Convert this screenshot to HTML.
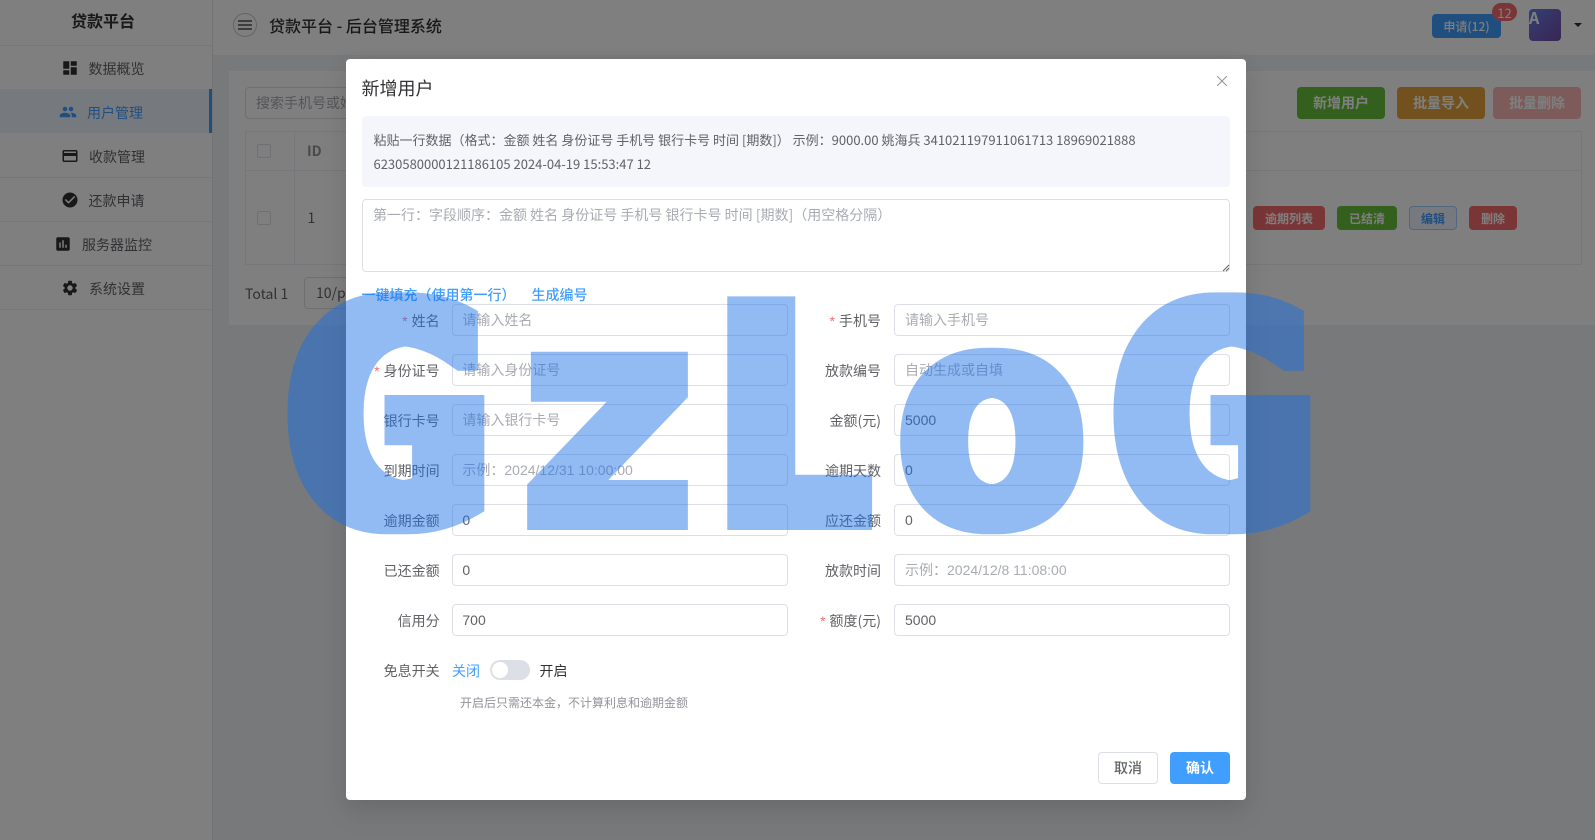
<!DOCTYPE html>
<html lang="zh"><head><meta charset="utf-8"><title>贷款平台 - 后台管理系统</title>
<style>
*{box-sizing:border-box}
html,body{margin:0;padding:0;width:1595px;height:840px;overflow:hidden;background:#f0f2f5;font-family:"Noto Sans CJK SC","Liberation Sans",sans-serif;color:#303133;font-size:14px}
.a{position:absolute}
.t{position:absolute;white-space:nowrap;line-height:20px;height:20px}
.c{display:flex;align-items:center;justify-content:center}
.btn{position:absolute;border-radius:4px;color:#fff;font-weight:700;display:flex;align-items:center;justify-content:center;white-space:nowrap}
svg.i{position:absolute;width:18px;height:18px;fill:#303133}
.line{position:absolute;left:0;width:212px;height:1px;background:#ebeef5}
.inp{position:absolute;width:336px;height:32px;border:1px solid #dcdfe6;border-radius:4px;background:#fff;font-family:"Liberation Sans","Noto Sans CJK SC",sans-serif;font-size:14px;line-height:30px;padding-left:10px;color:#606266;white-space:nowrap}
.l{padding-left:9.4px}
.ph{color:#a8abb2}
.lb{position:absolute;white-space:nowrap;text-align:right;line-height:20px;color:#606266;width:100px}
.lb b{color:#f56c6c;font-weight:400;margin-right:4px;font-family:"Liberation Sans",sans-serif}
.cb{position:absolute;width:14px;height:14px;border:1px solid #dcdfe6;border-radius:2px;background:#fff}
</style></head><body>

<div class="a" style="left:0;top:0;width:213px;height:840px;background:#fff;border-right:1px solid #e6e6e6"></div>
<div class="line" style="top:45px"></div>
<div class="t" style="left:71px;top:10px;font-size:16px;font-weight:700;line-height:20px">贷款平台</div>
<div class="a" style="left:0;top:89px;width:212px;height:44px;background:#ecf5ff"></div>
<div class="a" style="left:209px;top:89px;width:3px;height:44px;background:#409eff"></div>
<div class="line" style="top:177px"></div><div class="line" style="top:221px"></div><div class="line" style="top:265px"></div><div class="line" style="top:309px"></div>

<svg class="i" viewBox="0 0 24 24" style="left:61px;top:59px"><path d="M3 13h8V3H3v10zm0 8h8v-6H3v6zm10 0h8V11h-8v10zm0-18v6h8V3h-8z"/></svg>
<div class="t" style="left:88.5px;top:59px;color:#606266">数据概览</div>
<svg class="i" viewBox="0 0 24 24" style="left:59px;top:103px;fill:#409eff"><path d="M16 11c1.66 0 2.99-1.34 2.99-3S17.66 5 16 5c-1.66 0-3 1.34-3 3s1.34 3 3 3zm-8 0c1.66 0 2.99-1.34 2.99-3S9.66 5 8 5C6.34 5 5 6.34 5 8s1.34 3 3 3zm0 2c-2.33 0-7 1.17-7 3.5V19h14v-2.5c0-2.33-4.67-3.5-7-3.5zm8 0c-.29 0-.62.02-.97.05 1.16.84 1.97 1.97 1.97 3.45V19h6v-2.5c0-2.33-4.67-3.5-7-3.5z"/></svg>
<div class="t" style="left:87px;top:103px;color:#409eff">用户管理</div>
<svg class="i" viewBox="0 0 24 24" style="left:61px;top:147px"><path d="M20 4H4c-1.11 0-1.99.89-1.99 2L2 18c0 1.11.89 2 2 2h16c1.11 0 2-.89 2-2V6c0-1.11-.89-2-2-2zm0 14H4v-6h16v6zm0-10H4V6h16v2z"/></svg>
<div class="t" style="left:89px;top:147px;color:#606266">收款管理</div>
<svg class="i" viewBox="0 0 24 24" style="left:61px;top:191px"><path d="M12 2C6.48 2 2 6.48 2 12s4.48 10 10 10 10-4.48 10-10S17.52 2 12 2zm-2 15l-5-5 1.41-1.41L10 14.17l7.59-7.59L19 8l-9 9z"/></svg>
<div class="t" style="left:88.5px;top:191px;color:#606266">还款申请</div>
<svg class="i" viewBox="0 0 24 24" style="left:54px;top:235px"><path d="M19 3H5c-1.1 0-2 .9-2 2v14c0 1.1.9 2 2 2h14c1.1 0 2-.9 2-2V5c0-1.1-.9-2-2-2zM9 17H7v-7h2v7zm4 0h-2V7h2v10zm4 0h-2v-4h2v4z"/></svg>
<div class="t" style="left:82px;top:235px;color:#606266">服务器监控</div>
<svg class="i" viewBox="0 0 24 24" style="left:61px;top:279px"><path d="M19.14 12.94c.04-.3.06-.61.06-.94 0-.32-.02-.64-.07-.94l2.03-1.58c.18-.14.23-.41.12-.61l-1.92-3.32c-.12-.22-.37-.29-.59-.22l-2.39.96c-.5-.38-1.03-.7-1.62-.94l-.36-2.54c-.04-.24-.24-.41-.48-.41h-3.84c-.24 0-.43.17-.47.41l-.36 2.54c-.59.24-1.13.57-1.62.94l-2.39-.96c-.22-.08-.47 0-.59.22L2.74 8.87c-.12.21-.08.47.12.61l2.03 1.58c-.05.3-.09.63-.09.94s.02.64.07.94l-2.03 1.58c-.18.14-.23.41-.12.61l1.92 3.32c.12.22.37.29.59.22l2.39-.96c.5.38 1.03.7 1.62.94l.36 2.54c.05.24.24.41.48.41h3.84c.24 0 .44-.17.47-.41l.36-2.54c.59-.24 1.13-.56 1.62-.94l2.39.96c.22.08.47 0 .59-.22l1.92-3.32c.12-.22.07-.47-.12-.61l-2.01-1.58zM12 15.6c-1.98 0-3.6-1.62-3.6-3.6s1.62-3.6 3.6-3.6 3.6 1.62 3.6 3.6-1.62 3.6-3.6 3.6z"/></svg>
<div class="t" style="left:89px;top:279px;color:#606266">系统设置</div>

<div class="a" style="left:213px;top:0;width:1382px;height:55px;background:#fff"></div>
<div class="a" style="left:233px;top:13px;width:24px;height:24px;border:1px solid #c8cad0;border-radius:50%;background:#fff"></div>
<svg class="a" style="left:233px;top:13px;width:24px;height:24px" viewBox="0 0 24 24"><path d="M5 8h14M5 12h14M5 16h14" stroke="#303133" stroke-width="1.3" fill="none"/></svg>
<div class="t" style="left:269px;top:15px;font-size:16px;font-weight:500;white-space:pre">贷款平台 - 后台管理系统</div>
<div class="btn" style="left:1432px;top:14px;width:69px;height:24px;background:#409eff;font-size:12px;font-weight:500">申请(12)</div>
<div class="a c" style="left:1492px;top:3px;width:25px;height:18px;border-radius:9px;background:#f56c6c;color:#fff;font-size:13px">12</div>
<div class="a" style="left:1529px;top:9px;width:32px;height:32px;border-radius:4px;background:linear-gradient(135deg,#667eea,#764ba2);color:#fff;font-size:16px;line-height:16px;font-weight:700">A</div>
<div class="a" style="left:1574px;top:23px;border-left:4px solid transparent;border-right:4px solid transparent;border-top:4px solid #303133"></div>

<div class="a" style="left:229px;top:71px;width:1366px;height:254px;background:#fff"></div>
<div class="a" style="left:245px;top:87px;width:220px;height:32px;border:1px solid #dcdfe6;border-radius:4px;background:#fff;padding-left:10px;line-height:30px;color:#a8abb2">搜索手机号或姓名</div>
<div class="btn" style="left:1297px;top:87px;width:88px;height:32px;background:#67c23a">新增用户</div>
<div class="btn" style="left:1397px;top:87px;width:88px;height:32px;background:#e6a23c">批量导入</div>
<div class="btn" style="left:1493px;top:87px;width:88px;height:32px;background:#fab6b6">批量删除</div>

<div class="a" style="left:245px;top:131px;width:1337px;height:134px;border:1px solid #ebeef5"></div>
<div class="a" style="left:245px;top:170px;width:1337px;height:1px;background:#ebeef5"></div>
<div class="a" style="left:294px;top:131px;width:1px;height:134px;background:#ebeef5"></div>
<div class="cb" style="left:257px;top:144px"></div>
<div class="cb" style="left:257px;top:211px"></div>
<div class="t" style="left:307px;top:141px;font-weight:700;color:#909399">ID</div>
<div class="t" style="left:307.5px;top:208px;color:#606266">1</div>
<div class="btn" style="left:1253px;top:206px;width:72px;height:24px;background:#f56c6c;font-size:12px">逾期列表</div>
<div class="btn" style="left:1337px;top:206px;width:60px;height:24px;background:#67c23a;font-size:12px">已结清</div>
<div class="btn" style="left:1409px;top:206px;width:48px;height:24px;background:#ecf5ff;border:1px solid #a0cfff;color:#409eff;font-size:12px">编辑</div>
<div class="btn" style="left:1469px;top:206px;width:48px;height:24px;background:#f56c6c;font-size:12px">删除</div>
<div class="t" style="left:245px;top:284px;color:#606266">Total 1</div>
<div class="a" style="left:304px;top:277px;width:100px;height:32px;border:1px solid #dcdfe6;border-radius:4px;background:#fff;padding-left:11px;line-height:30px;color:#606266">10/page</div>

<div class="a" style="left:0;top:0;width:1595px;height:840px;background:rgba(0,0,0,.5)"></div>

<div class="a" style="left:346px;top:59px;width:900px;height:741px;background:#fff;border-radius:4px;box-shadow:0 12px 32px 4px rgba(0,0,0,.04),0 8px 20px rgba(0,0,0,.08)"></div>
<div class="t" style="left:361.5px;top:76px;font-size:18px;line-height:24px;height:24px">新增用户</div>
<svg class="a" style="left:1217px;top:76px;width:10px;height:10px" viewBox="0 0 10 10"><path d="M0 0L10 10M10 0L0 10" stroke="#909399" stroke-width="1" fill="none"/></svg>

<div class="a" style="left:362px;top:116px;width:868px;height:71px;background:#f4f6fb;border-radius:4px;padding:12px 11.5px;font-size:13px;line-height:24px;color:#606266;white-space:nowrap">粘贴一行数据（格式：金额 姓名 身份证号 手机号 银行卡号 时间 [期数]） 示例：9000.00 姚海兵 341021197911061713 18969021888<br>6230580000121186105 2024-04-19 15:53:47 12</div>
<div class="a" style="left:362px;top:199px;width:868px;height:73px;border:1px solid #dcdfe6;border-radius:4px;background:#fff;padding:4px 10px;font-size:14px;line-height:22px;color:#a8abb2;white-space:nowrap">第一行：字段顺序：金额 姓名 身份证号 手机号 银行卡号 时间 [期数]（用空格分隔）</div>
<svg class="a" style="left:1222px;top:264px;width:8px;height:8px" viewBox="0 0 8 8"><path d="M1 7L7 1M4 7L7 4" stroke="#606266" stroke-width="1" fill="none"/></svg>

<div class="t" style="left:361.5px;top:285px;color:#409eff;font-weight:500">一键填充（使用第一行）</div>
<div class="t" style="left:531.5px;top:285px;color:#409eff;font-weight:500">生成编号</div>

<div class="lb" style="left:339.6px;top:311px"><b>*</b>姓名</div>
<div class="inp ph l" style="left:452px;top:304px">请输入姓名</div>
<div class="lb" style="left:781px;top:311px"><b>*</b>手机号</div>
<div class="inp ph" style="left:894px;top:304px">请输入手机号</div>

<div class="lb" style="left:339.6px;top:361px"><b>*</b>身份证号</div>
<div class="inp ph l" style="left:452px;top:354px">请输入身份证号</div>
<div class="lb" style="left:781px;top:361px">放款编号</div>
<div class="inp ph" style="left:894px;top:354px">自动生成或自填</div>

<div class="lb" style="left:339.6px;top:411px">银行卡号</div>
<div class="inp ph l" style="left:452px;top:404px">请输入银行卡号</div>
<div class="lb" style="left:781px;top:411px">金额(元)</div>
<div class="inp" style="left:894px;top:404px">5000</div>

<div class="lb" style="left:339.6px;top:461px">到期时间</div>
<div class="inp ph l" style="left:452px;top:454px">示例：2024/12/31 10:00:00</div>
<div class="lb" style="left:781px;top:461px">逾期天数</div>
<div class="inp" style="left:894px;top:454px">0</div>

<div class="lb" style="left:339.6px;top:511px">逾期金额</div>
<div class="inp l" style="left:452px;top:504px">0</div>
<div class="lb" style="left:781px;top:511px">应还金额</div>
<div class="inp" style="left:894px;top:504px">0</div>

<div class="lb" style="left:339.6px;top:561px">已还金额</div>
<div class="inp l" style="left:452px;top:554px">0</div>
<div class="lb" style="left:781px;top:561px">放款时间</div>
<div class="inp ph" style="left:894px;top:554px">示例：2024/12/8 11:08:00</div>

<div class="lb" style="left:339.6px;top:611px">信用分</div>
<div class="inp l" style="left:452px;top:604px">700</div>
<div class="lb" style="left:781px;top:611px"><b>*</b>额度(元)</div>
<div class="inp" style="left:894px;top:604px">5000</div>

<div class="lb" style="left:339.6px;top:661px">免息开关</div>
<div class="t" style="left:452px;top:661px;color:#409eff">关闭</div>
<div class="a" style="left:490px;top:660px;width:40px;height:20px;border-radius:10px;background:#dcdfe6"></div>
<div class="a" style="left:492px;top:662px;width:16px;height:16px;border-radius:50%;background:#fff"></div>
<div class="t" style="left:539.5px;top:661px;color:#303133">开启</div>
<div class="t" style="left:460px;top:693px;font-size:12px;color:#909399">开启后只需还本金，不计算利息和逾期金额</div>

<div class="btn" style="left:1098px;top:752px;width:60px;height:32px;background:#fff;border:1px solid #dcdfe6;color:#606266;font-weight:500">取消</div>
<div class="btn" style="left:1170px;top:752px;width:60px;height:32px;background:#409eff">确认</div>

<svg class="a" style="left:0;top:0;width:1595px;height:840px;pointer-events:none" viewBox="0 0 1595 840">
<defs>
<filter id="fG" filterUnits="userSpaceOnUse" x="0" y="0" width="1595" height="840" color-interpolation-filters="sRGB"><feMorphology operator="dilate" radius="9.75 0"/></filter>
<filter id="fL" filterUnits="userSpaceOnUse" x="0" y="0" width="1595" height="840" color-interpolation-filters="sRGB"><feMorphology operator="dilate" radius="7.4 0"/></filter>
<filter id="fo" filterUnits="userSpaceOnUse" x="0" y="0" width="1595" height="840" color-interpolation-filters="sRGB"><feMorphology operator="dilate" radius="3.3 0"/></filter>
</defs>
<g font-family="'DejaVu Sans',sans-serif" font-weight="700" font-size="304" fill="#176fe9" stroke="#176fe9" stroke-width="12" stroke-linejoin="miter" stroke-miterlimit="6" opacity=".465">
<g filter="url(#fG)"><text transform="translate(290.2 524) scale(.79 1)">G</text></g>
<text transform="translate(519.5 524)">z</text>
<g filter="url(#fL)"><text transform="translate(718 524) scale(.766 1)">L</text></g>
<g filter="url(#fo)"><text transform="translate(897.3 524) scale(.905 1)">o</text></g>
<g filter="url(#fG)"><text transform="translate(1116.2 524) scale(.79 1)">G</text></g>
</g></svg>
</body></html>
